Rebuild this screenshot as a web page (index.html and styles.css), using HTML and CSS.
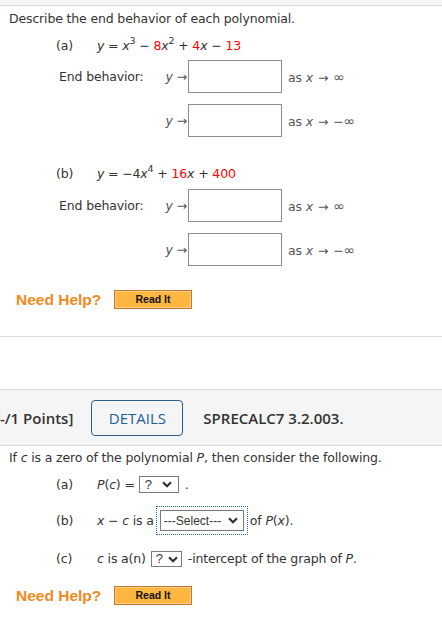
FILE: index.html
```html
<!DOCTYPE html>
<html>
<head>
<meta charset="utf-8">
<link rel="stylesheet" href="styles.css">
</head>
<body>
<div class="topstrip"></div>
<section class="q q1">
  <p class="prompt">Describe the end behavior of each polynomial.</p>
  <div class="part part-a"><span class="plabel">(a)</span><span class="math"><i>y</i> = <i>x</i><sup>3</sup> − <span class="red">8</span><i>x</i><sup>2</sup> + <span class="red">4</span><i>x</i> − <span class="red">13</span></span></div>
  <div class="eb">
    <span class="eb-label">End behavior:</span>
    <span class="yarrow"><i>y</i> →</span>
    <span class="box"></span>
    <span class="as">as <i>x</i><span class="arr">→</span><span class="inf">∞</span></span>
    <span></span>
    <span class="yarrow"><i>y</i> →</span>
    <span class="box"></span>
    <span class="as">as <i>x</i><span class="arr">→</span>−<span class="inf">∞</span></span>
  </div>
  <div class="part part-b"><span class="plabel">(b)</span><span class="math"><i>y</i> = −4<i>x</i><sup>4</sup> + <span class="red">16</span><i>x</i> + <span class="red">400</span></span></div>
  <div class="eb eb-b">
    <span class="eb-label">End behavior:</span>
    <span class="yarrow"><i>y</i> →</span>
    <span class="box"></span>
    <span class="as">as <i>x</i><span class="arr">→</span><span class="inf">∞</span></span>
    <span></span>
    <span class="yarrow"><i>y</i> →</span>
    <span class="box"></span>
    <span class="as">as <i>x</i><span class="arr">→</span>−<span class="inf">∞</span></span>
  </div>
  <div class="help help-1"><span class="need">Need Help?</span><button class="readit">Read It</button></div>
</section>

<div class="qhead">
  <span class="points">[-/1 Points]</span>
  <span class="details">DETAILS</span>
  <span class="qid">SPRECALC7 3.2.003.</span>
</div>

<section class="q q2">
  <p class="prompt">If <i>c</i> is a zero of the polynomial <i>P</i>, then consider the following.</p>
  <div class="part q2a"><span class="plabel">(a)</span><span><i>P</i>(<i>c</i>) =</span><span class="sel sel-a">?<svg class="chev" width="10" height="7" viewBox="0 0 10 7"><path d="M1 1.2 L5 5.2 L9 1.2" fill="none" stroke="#333" stroke-width="2.2"/></svg></span><span class="dot">.</span></div>
  <div class="part q2b"><span class="plabel">(b)</span><span><i>x</i> − <i>c</i> is a</span><span class="sel sel-b">---Select---<svg class="chev" width="10" height="7" viewBox="0 0 10 7"><path d="M1 1.2 L5 5.2 L9 1.2" fill="none" stroke="#333" stroke-width="2.2"/></svg></span><span>of <i>P</i>(<i>x</i>).</span></div>
  <div class="part q2c"><span class="plabel">(c)</span><span><i>c</i> is a(n)</span><span class="sel sel-c">?<svg class="chev" width="10" height="7" viewBox="0 0 10 7"><path d="M1 1.2 L5 5.2 L9 1.2" fill="none" stroke="#333" stroke-width="2.2"/></svg></span><span>-intercept of the graph of <i>P</i>.</span></div>
  <div class="help help-2"><span class="need">Need Help?</span><button class="readit">Read It</button></div>
</section>
</body>
</html>
```

FILE: styles.css
```css
* { box-sizing: border-box; }
html, body { margin: 0; padding: 0; background: #fff; }
body {
  width: 442px;
  height: 617px;
  overflow: hidden;
  font-family: "DejaVu Sans", Verdana, sans-serif;
  font-size: 12.5px;
  letter-spacing: -0.15px;
  color: #333;
}
i { font-style: italic; }
.red { color: #f00; }
sup { font-size: 9.5px; line-height: 0; vertical-align: 6px; }

.topstrip { height: 6px; background: #f5f5f5; border-bottom: 1px solid #dcdcdc; }

.q { padding-left: 9px; }
.q1 { padding-top: 5px; padding-bottom: 27px; border-bottom: 1px solid #d9d9d9; }
.prompt { margin: 0; line-height: 16px; white-space: nowrap; }

.part { display: flex; align-items: center; margin-left: 47px; line-height: 16px; white-space: nowrap; }
.plabel { width: 41px; flex: none; }
.part-a { margin-top: 11px; }
.part-b { margin-top: 29px; }

.eb {
  display: grid;
  grid-template-columns: 104px 25px 94px auto;
  row-gap: 11px;
  align-items: center;
  margin-left: 50px;
  margin-top: 6px;
}
.eb-b { margin-top: 7px; }
.yarrow { justify-self: end; padding-right: 1px; color: #555; }
.box { width: 94px; height: 33px; border: 1px solid #8c8c8c; background: #fff; }
.as { margin-left: 6px; color: #555; white-space: nowrap; }
.arr { margin: 0 5px 0 5px; }
.inf { font-size: 14px; }

.help { display: flex; align-items: center; margin-left: 7px; height: 19px; letter-spacing: 0; }
.help-1 { margin-top: 24px; }
.need {
  font-family: "Liberation Sans", Arial, sans-serif;
  font-weight: bold;
  font-size: 15.5px;
  color: #ef8a21;
  width: 98px;
}
.readit {
  width: 78px;
  height: 19px;
  padding: 0;
  border: 1px solid #c6782a;
  box-shadow: inset 0 0 0 1px #fdd089;
  background: #fdb640;
  font-family: "Liberation Sans", Arial, sans-serif;
  font-weight: bold;
  font-size: 10.5px;
  color: #111;
  line-height: 17px;
}

.qhead {
  margin-top: 52px;
  height: 57px;
  background: #f5f5f5;
  border-top: 1px solid #d9d9d9;
  border-bottom: 1px solid #d9d9d9;
  display: flex;
  align-items: center;
  font-family: "Open Sans", sans-serif;
  font-size: 15px;
  letter-spacing: 0;
  white-space: nowrap;
}
.points { font-weight: 600; color: #333; margin-left: -5px; }
.details {
  margin-left: 18px;
  width: 92px;
  height: 36px;
  border: 1px solid #2b5f8e;
  border-radius: 4px;
  color: #1d5e98;
  display: flex;
  align-items: center;
  justify-content: center;
  font-size: 15px;
  flex: none;
}
.qid { font-weight: 600; color: #333; margin-left: 20px; }

.q2 .prompt { margin-top: 4px; }
.q2a { margin-top: 10px; height: 17px; }
.q2b { margin-top: 17px; height: 21px; }
.q2c { margin-top: 20px; height: 16px; }
.help-2 { margin-top: 19px; }

.sel {
  display: inline-flex;
  align-items: center;
  justify-content: space-between;
  border: 1px solid #7a7a7a;
  background: #fff;
  font-family: "Liberation Sans", Arial, sans-serif;
  font-size: 13px;
  letter-spacing: 0;
  color: #333;
  flex: none;
}
.chev { display: block; }
.sel-a { width: 40px; height: 17px; margin-left: 4px; padding: 0 6px 0 5px; }
.dot { margin-left: 6px; }
.sel-b {
  width: 84px; height: 21px; margin: 0 6px 0 6px; padding: 0 5px 0 3px;
  font-size: 12px;
  outline: 1px dotted #1a6fc4; outline-offset: 3px;
}
.sel-c { width: 31px; height: 16px; margin: 0 6px 0 5px; padding: 0 3px 0 4px; }
```
